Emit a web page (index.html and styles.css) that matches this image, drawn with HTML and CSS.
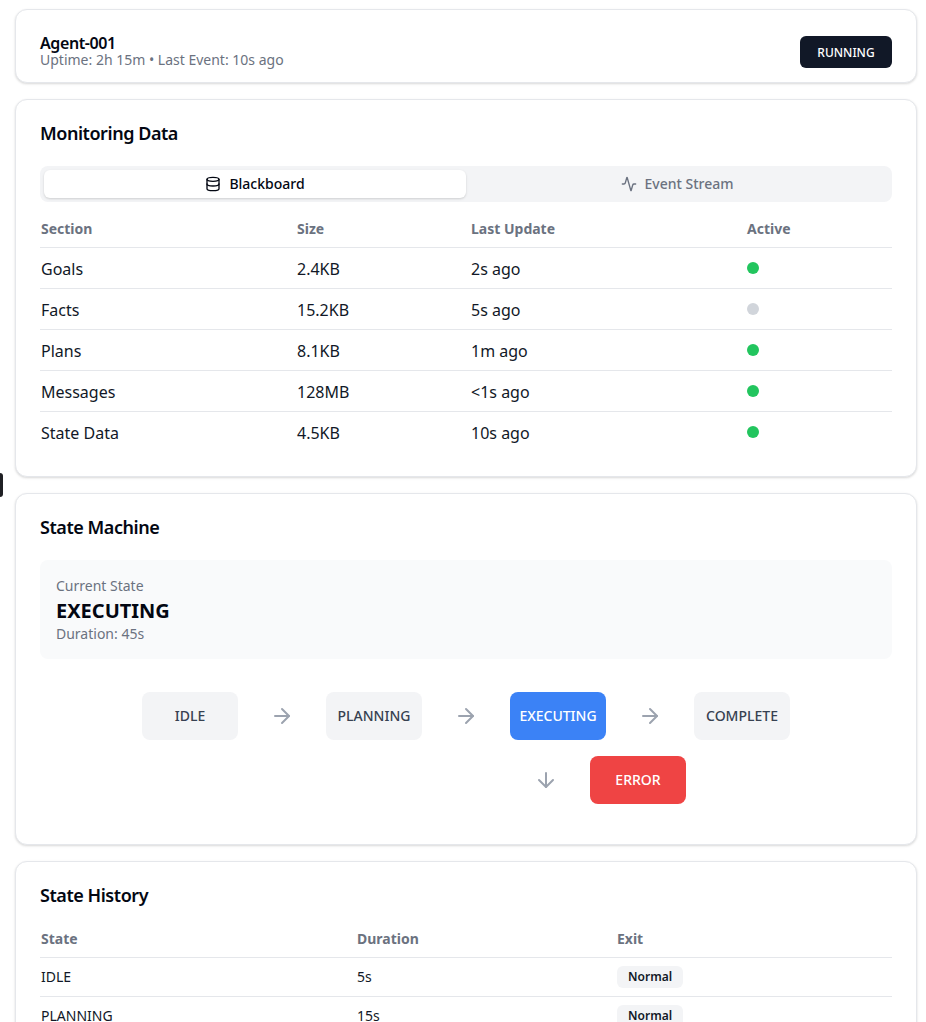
FILE: index.html
```html
<!DOCTYPE html>
<html lang="en">
<head>
    <meta charset="UTF-8">
    <meta name="viewport" content="width=device-width, initial-scale=1.0">
    <title>Agent Monitor</title>
    <link rel="stylesheet" href="styles.css">
</head>
<body>

    <div class="side-handle"></div>

    <main class="page">

        <section class="card agent-card">
            <div>
                <h2 class="agent-name">Agent-001</h2>
                <p class="agent-meta">Uptime: 2h 15m • Last Event: 10s ago</p>
            </div>
            <span class="status-badge">RUNNING</span>
        </section>

        <section class="card">
            <h3 class="card-title">Monitoring Data</h3>
            <div class="tabs">
                <button class="tab tab-active">
                    <svg class="icon" viewBox="0 0 24 24"><ellipse cx="12" cy="5" rx="9" ry="3"/><path d="M3 5V19A9 3 0 0 0 21 19V5"/><path d="M3 12A9 3 0 0 0 21 12"/></svg>
                    Blackboard
                </button>
                <button class="tab">
                    <svg class="icon" viewBox="0 0 24 24"><path d="M22 12h-2.48a2 2 0 0 0-1.93 1.46l-2.35 8.36a.25.25 0 0 1-.48 0L9.24 2.18a.25.25 0 0 0-.48 0l-2.35 8.36A2 2 0 0 1 4.49 12H2"/></svg>
                    Event Stream
                </button>
            </div>
            <table class="data-table monitor-table">
                <thead>
                    <tr>
                        <th>Section</th>
                        <th>Size</th>
                        <th>Last Update</th>
                        <th>Active</th>
                    </tr>
                </thead>
                <tbody>
                    <tr><td>Goals</td><td>2.4KB</td><td>2s ago</td><td><span class="dot dot-on"></span></td></tr>
                    <tr><td>Facts</td><td>15.2KB</td><td>5s ago</td><td><span class="dot"></span></td></tr>
                    <tr><td>Plans</td><td>8.1KB</td><td>1m ago</td><td><span class="dot dot-on"></span></td></tr>
                    <tr><td>Messages</td><td>128MB</td><td>&lt;1s ago</td><td><span class="dot dot-on"></span></td></tr>
                    <tr><td>State Data</td><td>4.5KB</td><td>10s ago</td><td><span class="dot dot-on"></span></td></tr>
                </tbody>
            </table>
        </section>

        <section class="card machine-card">
            <h3 class="card-title">State Machine</h3>
            <div class="current-state">
                <p class="muted">Current State</p>
                <p class="current-name">EXECUTING</p>
                <p class="muted">Duration: 45s</p>
            </div>
            <div class="flow">
                <div class="flow-row">
                    <div class="node">IDLE</div>
                    <svg class="arrow" viewBox="0 0 24 24"><path d="M5 12h14"/><path d="m12 5 7 7-7 7"/></svg>
                    <div class="node">PLANNING</div>
                    <svg class="arrow" viewBox="0 0 24 24"><path d="M5 12h14"/><path d="m12 5 7 7-7 7"/></svg>
                    <div class="node node-current">EXECUTING</div>
                    <svg class="arrow" viewBox="0 0 24 24"><path d="M5 12h14"/><path d="m12 5 7 7-7 7"/></svg>
                    <div class="node">COMPLETE</div>
                </div>
                <div class="flow-row flow-branch">
                    <svg class="arrow" viewBox="0 0 24 24"><path d="M12 5v14"/><path d="m19 12-7 7-7-7"/></svg>
                    <div class="node node-error">ERROR</div>
                </div>
            </div>
        </section>

        <section class="card">
            <h3 class="card-title history-title">State History</h3>
            <table class="data-table history-table">
                <thead>
                    <tr>
                        <th>State</th>
                        <th>Duration</th>
                        <th>Exit</th>
                    </tr>
                </thead>
                <tbody>
                    <tr><td>IDLE</td><td>5s</td><td><span class="exit-badge">Normal</span></td></tr>
                    <tr><td>PLANNING</td><td>15s</td><td><span class="exit-badge">Normal</span></td></tr>
                </tbody>
            </table>
        </section>

    </main>

</body>
</html>
```

FILE: styles.css
```css
* {
    margin: 0;
    padding: 0;
    box-sizing: border-box;
}

html, body {
    height: 100vh;
    overflow: hidden;
}

body {
    background-color: white;
    color: #030712;
    font-family: "Noto Sans", sans-serif;
}

.side-handle {
    position: absolute;
    left: -5px;
    top: 473px;
    width: 8px;
    height: 24px;
    background-color: #1f2024;
    border-radius: 3px;
}

.page {
    display: flex;
    flex-direction: column;
    gap: 16px;
    width: 902px;
    margin-left: 15px;
    padding-top: 9px;
}

.card {
    flex-shrink: 0;
    background-color: white;
    border: 1px solid #e5e7eb;
    border-radius: 12px;
    box-shadow: 0 1px 3px rgba(0, 0, 0, 0.1), 0 1px 2px rgba(0, 0, 0, 0.06);
    padding: 24px;
}

.agent-card {
    display: flex;
    justify-content: space-between;
    align-items: flex-start;
    padding-bottom: 14px;
}

.agent-name {
    font-size: 16px;
    font-weight: 600;
    letter-spacing: -0.025em;
    line-height: 18px;
}

.agent-meta {
    font-size: 14px;
    line-height: 16px;
    color: #6b7280;
}

.status-badge {
    display: flex;
    align-items: center;
    justify-content: center;
    width: 92px;
    height: 32px;
    margin-top: 2px;
    background-color: #111827;
    color: white;
    border-radius: 6px;
    font-size: 12px;
    font-weight: 500;
}

.card-title {
    font-size: 18px;
    font-weight: 600;
    letter-spacing: -0.025em;
    line-height: 18px;
    margin-bottom: 24px;
}

.tabs {
    display: flex;
    height: 36px;
    padding: 4px;
    background-color: #f3f4f6;
    border-radius: 8px;
}

.tab {
    flex: 1;
    display: flex;
    align-items: center;
    justify-content: center;
    gap: 8px;
    padding-bottom: 1px;
    border: none;
    border-radius: 6px;
    background: none;
    color: #6b7280;
    font-family: inherit;
    font-size: 14px;
    font-weight: 500;
}

.tab-active {
    background-color: white;
    color: #030712;
    box-shadow: 0 1px 3px rgba(0, 0, 0, 0.1), 0 1px 2px rgba(0, 0, 0, 0.06);
}

.icon {
    width: 16px;
    height: 16px;
    fill: none;
    stroke: currentColor;
    stroke-width: 2;
    stroke-linecap: round;
    stroke-linejoin: round;
}

.data-table {
    width: 100%;
    border-collapse: collapse;
    table-layout: fixed;
    text-align: left;
}

.data-table th {
    color: #6b7280;
    font-size: 14px;
    font-weight: 700;
    height: 45px;
    padding-top: 8px;
    border-bottom: 1px solid #e5e7eb;
}

.data-table td {
    color: #111827;
    border-bottom: 1px solid #e5e7eb;
}

.data-table th:first-child,
.data-table td:first-child {
    padding-left: 1px;
}

.data-table tr:last-child td {
    border-bottom: none;
}

.monitor-table td {
    font-size: 16px;
    height: 41px;
    padding-top: 2px;
}

.monitor-table th:nth-child(1) { width: 257px; }
.monitor-table th:nth-child(2) { width: 174px; }
.monitor-table th:nth-child(3) { width: 276px; }

.history-table td {
    font-size: 14px;
    height: 39px;
}

.history-table th:nth-child(1) { width: 317px; }
.history-table th:nth-child(2) { width: 260px; }

.dot {
    display: block;
    width: 12px;
    height: 12px;
    margin-bottom: 2px;
    border-radius: 50%;
    background-color: #d1d5db;
}

.dot-on {
    background-color: #22c55e;
}

.current-state {
    background-color: #f9fafb;
    border-radius: 8px;
    padding: 16px;
    height: 99px;
}

.muted {
    color: #6b7280;
    font-size: 14px;
    line-height: 20px;
}

.current-name {
    font-size: 20px;
    font-weight: 700;
    line-height: 28px;
    padding-top: 1px;
    margin-bottom: -1px;
}

.flow {
    display: flex;
    flex-direction: column;
    gap: 16px;
    width: 648px;
    margin: 33px auto 16px;
}

.flow-row {
    display: flex;
    align-items: center;
    gap: 32px;
}

.flow-branch {
    padding-left: 392px;
}

.node {
    display: flex;
    align-items: center;
    justify-content: center;
    width: 96px;
    height: 48px;
    padding-bottom: 2px;
    border-radius: 8px;
    background-color: #f3f4f6;
    color: #374151;
    font-size: 14px;
    font-weight: 500;
}

.node-current {
    background-color: #3b82f6;
    color: white;
}

.node-error {
    background-color: #ef4444;
    color: white;
}

.arrow {
    width: 24px;
    height: 24px;
    fill: none;
    stroke: #9ca3af;
    stroke-width: 2;
    stroke-linecap: round;
    stroke-linejoin: round;
}

.history-title {
    margin-bottom: 8px;
}

.exit-badge {
    display: inline-block;
    padding: 2px 11px;
    background-color: #f3f4f6;
    border-radius: 6px;
    color: #111827;
    font-size: 12px;
    font-weight: 600;
    line-height: 18px;
    vertical-align: middle;
}
```
